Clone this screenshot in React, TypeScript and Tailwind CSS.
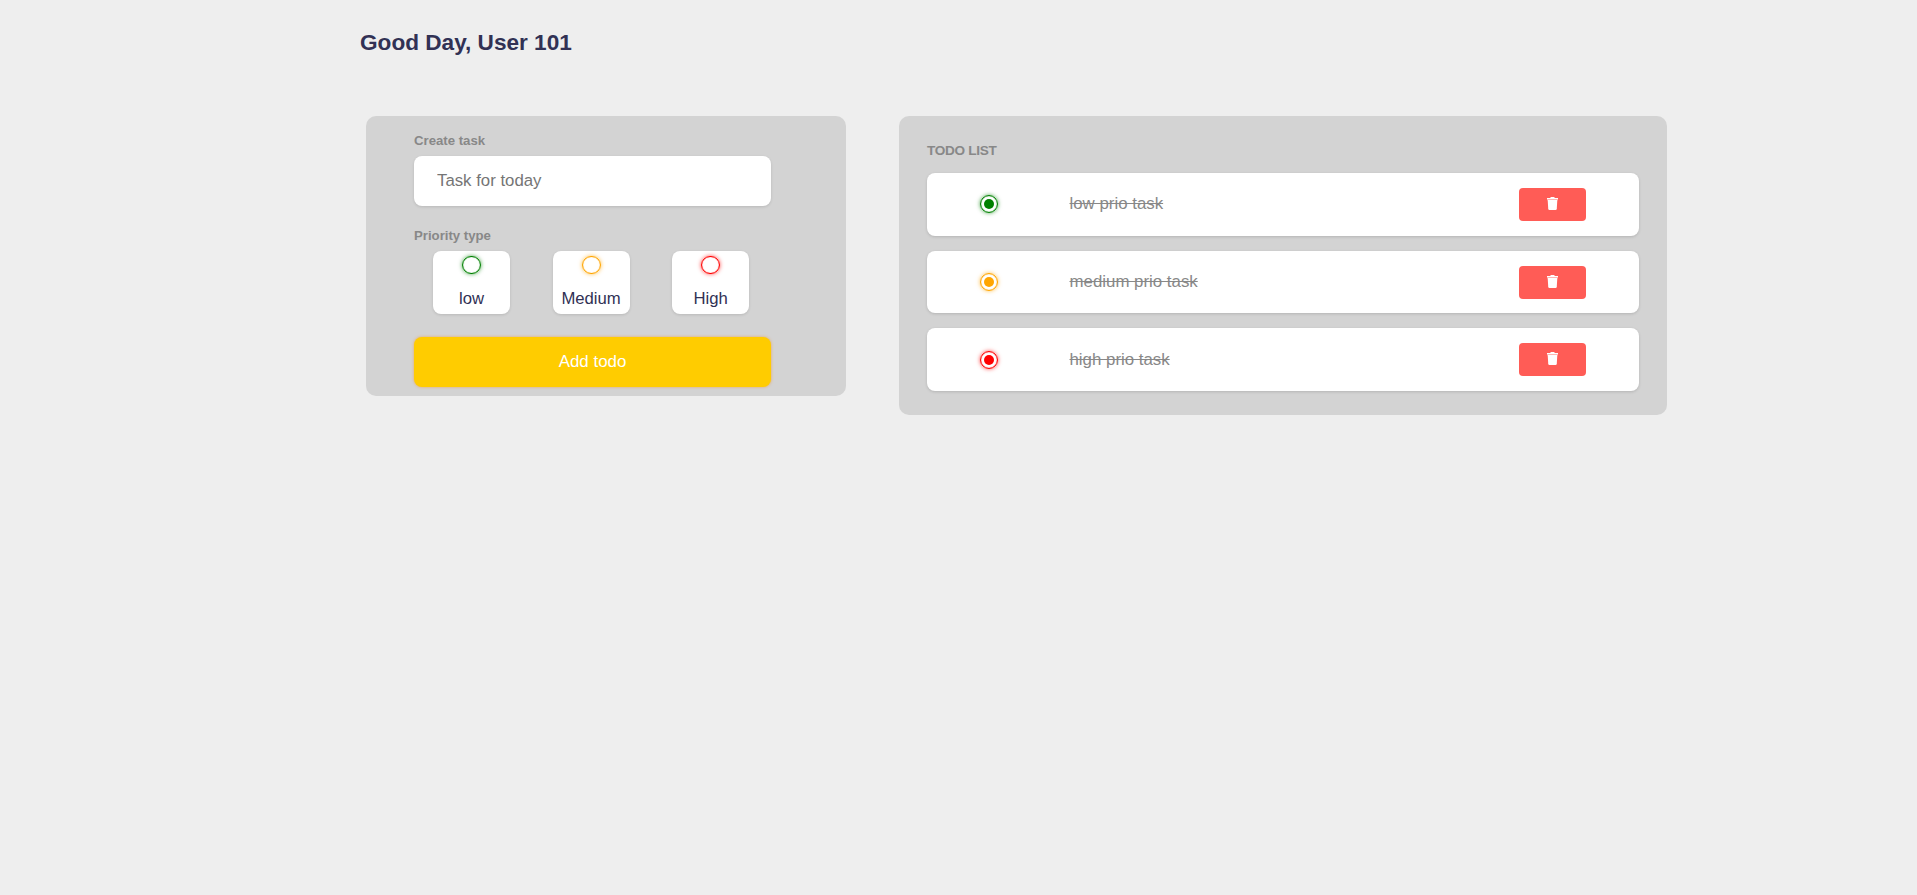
const priorities = [
  { name: "low", ring: "border-[green] shadow-[0_0_4px_rgba(0,128,0,0.7),inset_0_0_1px_green]", dot: "bg-[green]" },
  { name: "Medium", ring: "border-[orange] shadow-[0_0_4px_rgba(255,165,0,0.7),inset_0_0_1px_orange]", dot: "bg-[orange]" },
  { name: "High", ring: "border-[red] shadow-[0_0_4px_rgba(255,0,0,0.7),inset_0_0_1px_red]", dot: "bg-[red]" },
];

const todos = ["low prio task", "medium prio task", "high prio task"];

function TrashIcon() {
  return (
    <svg width="11" height="13" viewBox="0 0 11 13" fill="currentColor" aria-hidden="true">
      <path d="M0 1h3l1-1h3l1 1h3v1.3H0z" />
      <path d="M0 2.2h11v1H0z" opacity="0.5" />
      <path d="M0.7 3.1h9.6l-.5 8.7q-.1 1.2-1.2 1.2H2.4q-1.1 0-1.2-1.2z" />
    </svg>
  );
}

export default function App() {
  return (
    <main className="h-[895px] w-full bg-[#eeeeee] pt-[25px] font-['Liberation_Sans',Arial,sans-serif] text-[#313154]">
      <h1 className="ml-[360px] text-[22.6px] leading-[36px] font-bold">Good Day, User 101</h1>
      <div className="mt-[55px] ml-[366px] flex items-start gap-[53px]">
        <section className="flex h-[280px] w-[480px] flex-col rounded-[10px] bg-[#d3d3d3] pl-[48px]">
          <h2 className="mt-[17px] text-[13.2px] leading-[16px] font-bold text-[#888]">Create task</h2>
          <input
            placeholder="Task for today"
            className="mt-[7px] h-[50px] w-[357px] rounded-[8px] bg-white px-[23px] text-[16.8px] shadow-[0_1px_3px_rgba(0,0,0,0.12)] placeholder:text-[#757575]"
          />
          <h2 className="mt-[22px] text-[13.2px] leading-[16px] font-bold text-[#888]">Priority type</h2>
          <div className="mt-[7px] ml-[19px] flex gap-[42.6px]">
            {priorities.map((p) => (
              <label key={p.name} className="flex h-[63px] w-[77px] flex-col items-center rounded-[8px] bg-white pt-[5px] shadow-[0_1px_3px_rgba(0,0,0,0.12)]">
                <span className={`h-[18px] w-[19px] rounded-full border ${p.ring}`} />
                <span className="mt-[13px] text-[16.7px] leading-[24px]">{p.name}</span>
              </label>
            ))}
          </div>
          <button className="mt-[23px] h-[50px] w-[357px] rounded-[8px] bg-[#ffcc00] pb-px text-[16.9px] text-white shadow-[0_0_3px_rgba(255,140,0,0.6)]">
            Add todo
          </button>
        </section>
        <section className="h-[299px] w-[768px] rounded-[10px] bg-[#d3d3d3] px-[28px] pt-[27px]">
          <h2 className="text-[13.6px] leading-[16px] font-bold tracking-[-0.3px] text-[#888]">TODO LIST</h2>
          <ul className="mt-[14px] flex flex-col gap-[14.8px]">
            {todos.map((t, i) => (
              <li key={t} className="flex h-[62.8px] items-center rounded-[8px] bg-white pr-[53px] pl-[53px] shadow-[0_1px_3px_rgba(0,0,0,0.15)]">
                <span className={`flex size-[18px] items-center justify-center rounded-full border ${priorities[i].ring}`}>
                  <span className={`size-[10px] rounded-full ${priorities[i].dot}`} />
                </span>
                <span className="ml-[71.5px] flex-1 text-[16.85px] leading-[24px] text-[#888] line-through">{t}</span>
                <button className="mt-[0.4px] flex h-[33px] w-[67px] items-center justify-center rounded-[4px] bg-[#ff5c56] pb-[2px] text-white">
                  <TrashIcon />
                </button>
              </li>
            ))}
          </ul>
        </section>
      </div>
    </main>
  );
}
